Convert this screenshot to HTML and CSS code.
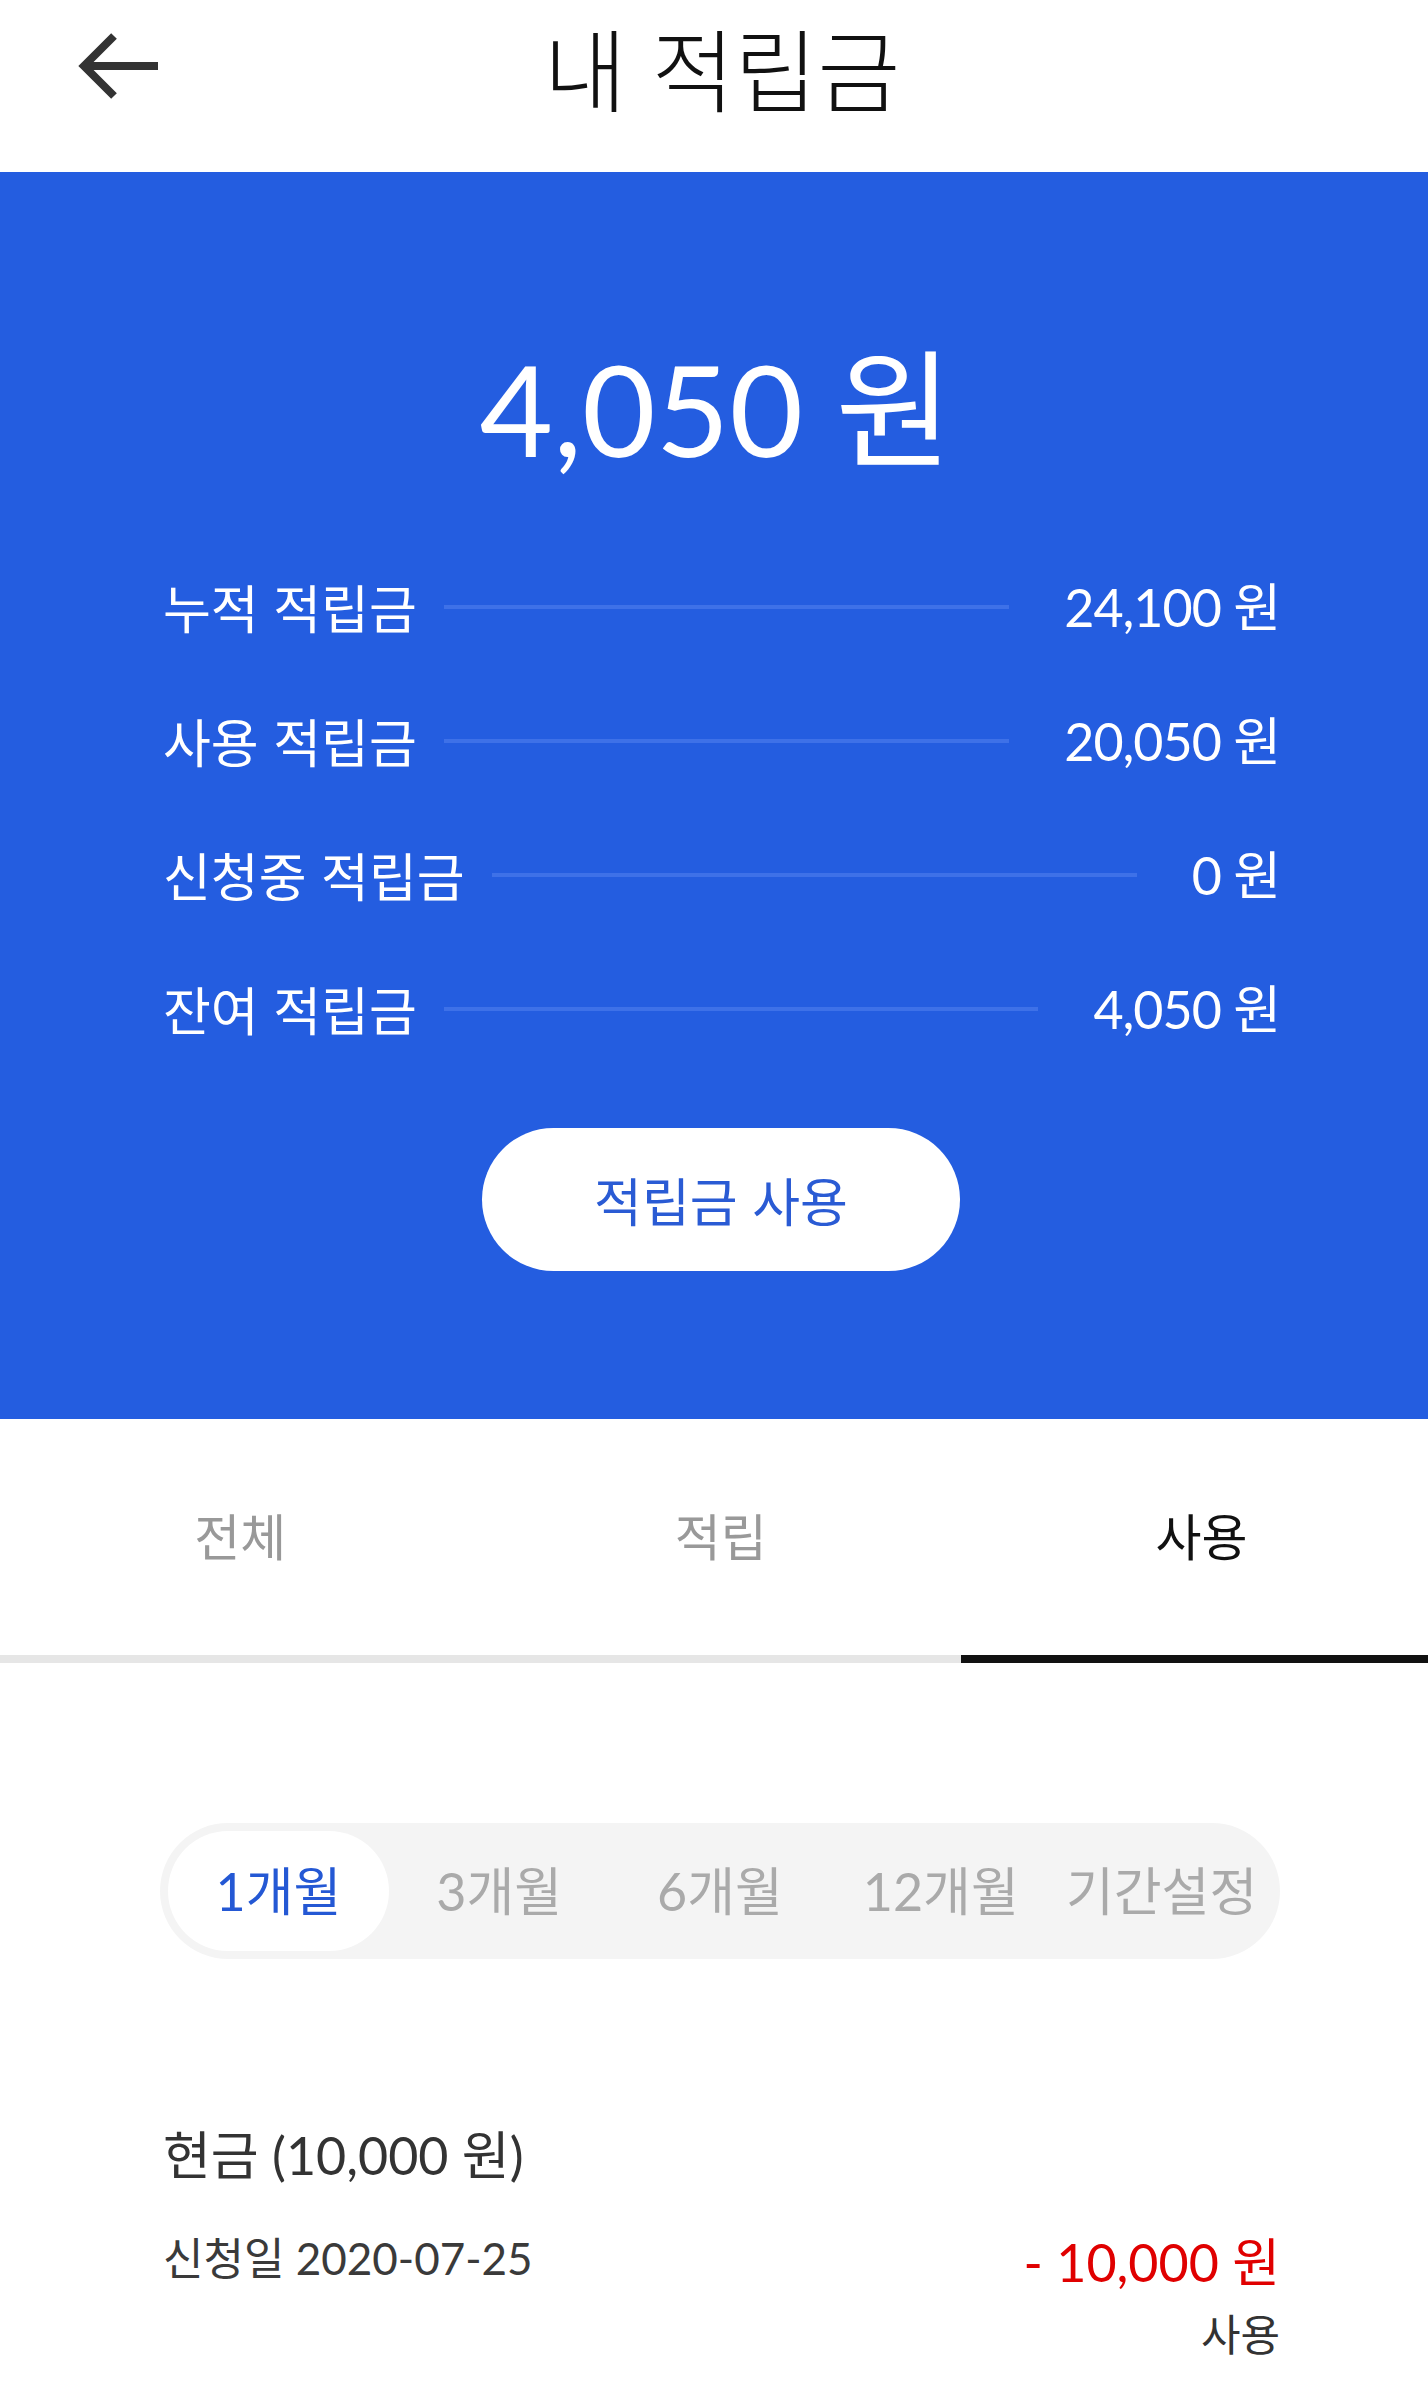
FILE: index.html
```html
<!DOCTYPE html>
<html lang="ko">
<head>
<meta charset="utf-8">
<title>내 적립금</title>
<link rel="stylesheet" href="styles.css">
</head>
<body>
<header class="topbar">
  <button class="back" aria-label="뒤로">
    <svg width="82" height="68" viewBox="0 0 82 68"><path d="M36 4 L6 34 L36 64 M6 34 H80" fill="none" stroke="#333" stroke-width="8"/></svg>
  </button>
  <h1 class="title">내 적립금</h1>
  <span></span>
</header>

<section class="summary">
  <div class="balance">4,050 원</div>
  <ul class="stats">
    <li class="stat"><span class="stat-label">누적 적립금</span><span class="stat-line"></span><span class="stat-value">24,100 원</span></li>
    <li class="stat"><span class="stat-label">사용 적립금</span><span class="stat-line"></span><span class="stat-value">20,050 원</span></li>
    <li class="stat"><span class="stat-label">신청중 적립금</span><span class="stat-line"></span><span class="stat-value">0 원</span></li>
    <li class="stat"><span class="stat-label">잔여 적립금</span><span class="stat-line"></span><span class="stat-value">4,050 원</span></li>
  </ul>
  <div class="btn-wrap"><button class="use-btn">적립금 사용</button></div>
</section>

<nav class="tabs">
  <div class="tab">전체</div>
  <div class="tab">적립</div>
  <div class="tab tab-active">사용</div>
</nav>

<div class="content">
  <div class="periods">
    <div class="period period-active">1개월</div>
    <div class="period">3개월</div>
    <div class="period">6개월</div>
    <div class="period">12개월</div>
    <div class="period">기간설정</div>
  </div>

  <div class="item">
    <div class="item-title">현금 (10,000 원)</div>
    <div class="item-row">
      <div class="item-date">신청일 2020-07-25</div>
      <div class="item-right">
        <div class="item-amount">- 10,000 원</div>
        <div class="item-type">사용</div>
      </div>
    </div>
  </div>
</div>
</body>
</html>
```

FILE: styles.css
```css
* { box-sizing: border-box; }
body {
  margin: 0;
  background: #fff;
  font-family: Lato, "Noto Sans CJK KR", sans-serif;
  color: #333;
}
ul { list-style: none; margin: 0; padding: 0; }
button { font-family: inherit; border: 0; background: none; padding: 0; cursor: pointer; }

.topbar {
  height: 172px;
  padding: 0 0 40px 0;
  display: grid;
  grid-template-columns: 1fr auto 1fr;
  align-items: center;
}
.back { display: flex; width: 82px; height: 68px; margin-left: 78px; }
.title {
  margin: 0 0 0 16px;
  font-family: "Noto Sans CJK KR", sans-serif;
  font-weight: 300;
  font-size: 90px;
  line-height: 100px;
  color: #111;
}

.summary {
  background: #245de0;
  color: #fff;
  padding: 161px 148px 148px 160px;
}
.balance {
  text-align: center;
  font-size: 127px;
  line-height: 150px;
  margin-left: -8px;
}
.stats { margin-top: 57px; }
.stat {
  height: 134px;
  display: flex;
  align-items: center;
}
.stat-label {
  font-family: "Noto Sans CJK KR", sans-serif;
  font-size: 52px;
  line-height: 60px;
  padding-left: 3px;
}
.stat-line {
  flex: 1;
  height: 4px;
  background: #3e71e8;
  margin: 0 55px 0 27px;
}
.stat-value {
  font-size: 52px;
  letter-spacing: -1px;
  line-height: 60px;
}
.btn-wrap {
  margin-top: 52px;
  display: flex;
  justify-content: center;
  padding-left: 2px;
}
.use-btn {
  width: 478px;
  height: 143px;
  border-radius: 72px;
  background: #fff;
  color: #2a5bd4;
  font-size: 52px;
  font-family: "Noto Sans CJK KR", sans-serif;
}

.tabs {
  display: grid;
  grid-template-columns: 1fr 1fr 467px;
}
.tab {
  height: 244px;
  line-height: 236px;
  text-align: center;
  font-size: 50px;
  color: #999;
  border-bottom: 8px solid #e6e6e6;
}
.tab-active { color: #111; border-bottom-color: #111; padding-left: 14px; }

.content { padding: 160px 148px 0 160px; }
.periods {
  height: 136px;
  border-radius: 68px;
  background: #f4f4f4;
  padding: 8px;
  display: flex;
}
.period {
  flex: 1;
  border-radius: 60px;
  text-align: center;
  line-height: 120px;
  font-size: 52px;
  color: #aaa;
}
.period-active { background: #fff; color: #2458d4; }

.item { margin-top: 161px; padding-left: 3px; }
.item-title {
  font-size: 52px;
  line-height: 70px;
  color: #333;
}
.item-row {
  margin-top: 38px;
  display: flex;
  justify-content: space-between;
  align-items: flex-start;
}
.item-date {
  font-size: 44px;
  line-height: 60px;
  color: #3a3a3a;
}
.item-right { text-align: right; }
.item-amount {
  font-size: 52px;
  line-height: 68px;
  color: #e00000;
}
.item-type {
  margin-top: 11px;
  font-size: 43px;
  line-height: 56px;
  color: #333;
}
```
